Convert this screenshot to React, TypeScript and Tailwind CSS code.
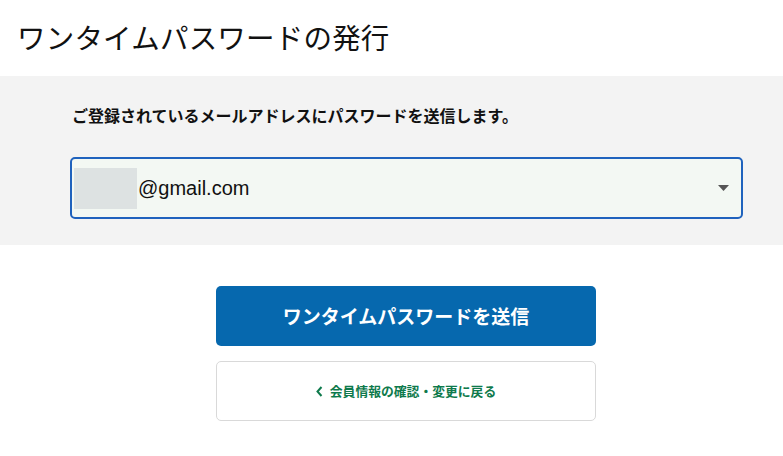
export default function App() {
  return (
    <div className="min-h-[456px] bg-white font-['Noto_Sans_CJK_JP',sans-serif] text-[#111]">
      <h1 className="flex h-[76px] items-center pb-[1px] pl-[17px] text-[28.5px] font-normal tracking-[0.2px]">
        ワンタイムパスワードの発行
      </h1>
      <section className="h-[169px] bg-[#f3f3f3] pt-[25px]">
        <p className="pl-[72px] text-[16px] font-bold leading-[28px]">
          ご登録されているメールアドレスにパスワードを送信します。
        </p>
        <div className="ml-[70px] mr-[40px] mt-[28px] flex h-[62px] items-center rounded-[5px] border-2 border-[#1f62bd] bg-[#f3f8f3] pl-[2px] pr-[12px]">
          <div className="h-[41px] w-[63px] bg-[#dde2e2]" />
          <span className="ml-[1px] font-['Liberation_Sans',sans-serif] text-[20px]">@gmail.com</span>
          <svg className="ml-auto h-[6px] w-[11px]" viewBox="0 0 11 6">
            <path d="M0 0h11L5.5 6z" fill="#555" />
          </svg>
        </div>
      </section>
      <div className="ml-[216px] mt-[41px] flex w-[380px] flex-col gap-[15px]">
        <button className="flex h-[60px] items-center justify-center rounded-[5px] bg-[#0668ae] text-[19px] font-bold text-white">
          ワンタイムパスワードを送信
        </button>
        <button className="flex h-[60px] items-center justify-center gap-[7px] rounded-[5px] border border-[#d9d9d9] bg-white text-[12.8px] font-bold text-[#0e7a4c]">
          <svg className="h-[11px] w-[7px]" viewBox="0 0 7 11">
            <path d="M5.5 1 1.5 5.5l4 4.5" fill="none" stroke="#0e7a4c" strokeWidth="2" />
          </svg>
          会員情報の確認・変更に戻る
        </button>
      </div>
    </div>
  )
}
